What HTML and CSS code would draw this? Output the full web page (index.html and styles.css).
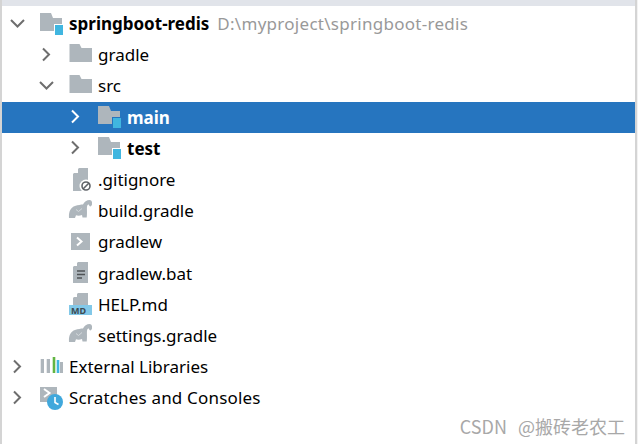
FILE: index.html
```html
<!DOCTYPE html>
<html lang="en">
<head>
  <meta charset="UTF-8">
  <title>Project tree</title>
  <link rel="stylesheet" href="styles.css">
</head>
<body>
  <svg class="defs" width="0" height="0">
    <symbol id="open" viewBox="0 0 16 16"><path d="M2 4l6.500 6.500L15 4" fill="none" stroke="currentColor" stroke-width="2"/></symbol>
    <symbol id="closed" viewBox="0 0 16 16"><path d="M5 1.500l6 6-6 6" fill="none" stroke="currentColor" stroke-width="2"/></symbol>
    <symbol id="folder" viewBox="0 0 24 24"><path d="M1.500 1h10l2 4H24v14H1.500z" fill="#aeb6bc"/></symbol>
    <symbol id="module" viewBox="0 0 24 24"><path d="M1 1h11l2 5h9v6h-8v7H1z" fill="#aeb6bc"/><rect x="16" y="13" width="8" height="10" fill="#40b6e0"/></symbol>
    <symbol id="ignore" viewBox="0 0 24 24"><path d="M5 6l6-6h9v23H5z" fill="#aeb6bc"/><path d="M5 5l5-5v5z" fill="#fff"/><circle cx="18" cy="18" r="6.500" fill="#fff"/><circle cx="18" cy="18" r="4" fill="none" stroke="#5f6368" stroke-width="1.600"/><path d="M15 21l6-6" stroke="#5f6368" stroke-width="1.600"/></symbol>
    <symbol id="gradle" viewBox="0 0 24 24"><path d="M1 19C.5 13 2.500 8.500 7 7c3-1 6-1.500 8-1.500 1-2.500 4-4.500 6.500-4.500 2 0 3 2 2.500 4.500-.3 1.500-1.700 2.500-2.500 1.500-.5-.8-.5-1.500-1-1.500-1 0-1.300 1-1.500 2.500-.3 2.500.3 5.500-.3 10.500h-4.200l-.5-2.500c-2 .8-4.500.8-6 .3L7 19H3z" fill="#aeb6bc"/><path d="M8 10.500l2.500 2 3.500-3" fill="none" stroke="#d5dadd" stroke-width="1"/></symbol>
    <symbol id="shell" viewBox="0 0 24 24"><rect x="3" y="3" width="19" height="17" fill="#aeb6bc"/><path d="M9 7.500l4.500 4-4.500 4" fill="none" stroke="#fff" stroke-width="2"/></symbol>
    <symbol id="text" viewBox="0 0 24 24"><path d="M5 6l5-5h10v21H5z" fill="#aeb6bc"/><path d="M5 5l4-4v4z" fill="#fff"/><path d="M9 10h8M9 13.500h8M9 17h5" stroke="#4f5356" stroke-width="1.500"/></symbol>
    <symbol id="libs" viewBox="0 0 24 24"><rect x="1.700" y="4" width="3.300" height="14" fill="#aeb6bc"/><rect x="7.700" y="4" width="3.300" height="14" fill="#aeb6bc"/><rect x="13.700" y="2" width="2.600" height="16" fill="#62b543"/><rect x="17.700" y="5" width="2.600" height="13" fill="#40b6e0"/><rect x="21" y="7" width="3" height="11" fill="#aeb6bc"/></symbol>
    <symbol id="scratch" viewBox="0 0 24 24"><rect x="1" y="1" width="17" height="15" fill="#aeb6bc"/><path d="M5 3l5.500 4L5 11" fill="none" stroke="#fff" stroke-width="2"/><circle cx="16" cy="16" r="8" fill="#40a8dc"/><path d="M16 11v5.500l3.500 2" fill="none" stroke="#fff" stroke-width="1.600"/></symbol>
  </svg>

  <div class="top-strip"></div>

  <ul class="tree">
    <li class="row depth-0">
      <svg class="arrow"><use href="#open"/></svg>
      <svg class="icon"><use href="#module"/></svg>
      <b>springboot-redis</b><span class="path">D:\myproject\springboot-redis</span>
    </li>
    <li class="row depth-1">
      <svg class="arrow"><use href="#closed"/></svg>
      <svg class="icon"><use href="#folder"/></svg>
      <span>gradle</span>
    </li>
    <li class="row depth-1">
      <svg class="arrow"><use href="#open"/></svg>
      <svg class="icon"><use href="#folder"/></svg>
      <span>src</span>
    </li>
    <li class="row depth-2 selected">
      <svg class="arrow"><use href="#closed"/></svg>
      <svg class="icon"><use href="#module"/></svg>
      <b>main</b>
    </li>
    <li class="row depth-2">
      <svg class="arrow"><use href="#closed"/></svg>
      <svg class="icon"><use href="#module"/></svg>
      <b>test</b>
    </li>
    <li class="row depth-1">
      <span class="arrow"></span>
      <svg class="icon"><use href="#ignore"/></svg>
      <span>.gitignore</span>
    </li>
    <li class="row depth-1">
      <span class="arrow"></span>
      <svg class="icon"><use href="#gradle"/></svg>
      <span>build.gradle</span>
    </li>
    <li class="row depth-1">
      <span class="arrow"></span>
      <svg class="icon"><use href="#shell"/></svg>
      <span>gradlew</span>
    </li>
    <li class="row depth-1">
      <span class="arrow"></span>
      <svg class="icon"><use href="#text"/></svg>
      <span>gradlew.bat</span>
    </li>
    <li class="row depth-1">
      <span class="arrow"></span>
      <svg class="icon" viewBox="0 0 24 24">
        <path d="M5 6l5-5h10v13H5z" fill="#aeb6bc"/>
        <path d="M5 5l4-4v4z" fill="#fff"/>
        <rect x="1" y="13" width="23" height="10" fill="#82c8e8"/>
        <text x="3" y="21.500" class="md-label">MD</text>
      </svg>
      <span>HELP.md</span>
    </li>
    <li class="row depth-1">
      <span class="arrow"></span>
      <svg class="icon"><use href="#gradle"/></svg>
      <span>settings.gradle</span>
    </li>
    <li class="row depth-0">
      <svg class="arrow"><use href="#closed"/></svg>
      <svg class="icon"><use href="#libs"/></svg>
      <span>External Libraries</span>
    </li>
    <li class="row depth-0">
      <svg class="arrow"><use href="#closed"/></svg>
      <svg class="icon"><use href="#scratch"/></svg>
      <span class="wide">Scratches and Consoles</span>
    </li>
  </ul>

  <div class="watermark">CSDN @搬砖老农工</div>
</body>
</html>
```

FILE: styles.css
```css
html {
  height: 100%;
  border-right: 1px solid #f2f2f2;
  box-sizing: border-box;
}

body {
  margin: 0;
  height: 100%;
  box-sizing: border-box;
  display: flex;
  flex-direction: column;
  overflow: hidden;
  background-color: white;
  border-left: 2px solid #d4d4d4;
  border-right: 2px solid #d4d4d4;
  font-family: "Noto Sans", "Noto Sans CJK SC", sans-serif;
  font-size: 17px;
  color: #000;
}

.defs {
  position: absolute;
}

.top-strip {
  height: 6px;
  flex: none;
  background-color: #e1e4ea;
}

.tree {
  list-style: none;
  margin: 0;
  padding: 2px 0 0;
}

.row {
  display: flex;
  align-items: center;
  height: 31.2px;
  white-space: nowrap;
}

.depth-0 {
  padding-left: 7px;
}

.depth-1 {
  padding-left: 36px;
}

.depth-2 {
  padding-left: 65px;
}

.selected {
  background-color: #2675bf;
  color: white;
}

.arrow {
  width: 16px;
  height: 16px;
  color: #6e6e6e;
  flex: none;
}

.selected .arrow {
  color: white;
}

.icon {
  width: 24px;
  height: 24px;
  margin: 0 6px 0 14px;
  flex: none;
}

.path {
  margin-left: 8px;
  color: #999;
  letter-spacing: 0.28px;
}

.wide {
  letter-spacing: 0.18px;
}

.md-label {
  font-size: 9px;
  font-weight: bold;
  fill: #3d4a52;
}

.watermark {
  margin: auto 10px 10px auto;
  font-family: "Noto Sans CJK SC", sans-serif;
  font-size: 18px;
  word-spacing: 7px;
  color: #a8a8a8;
}
```
